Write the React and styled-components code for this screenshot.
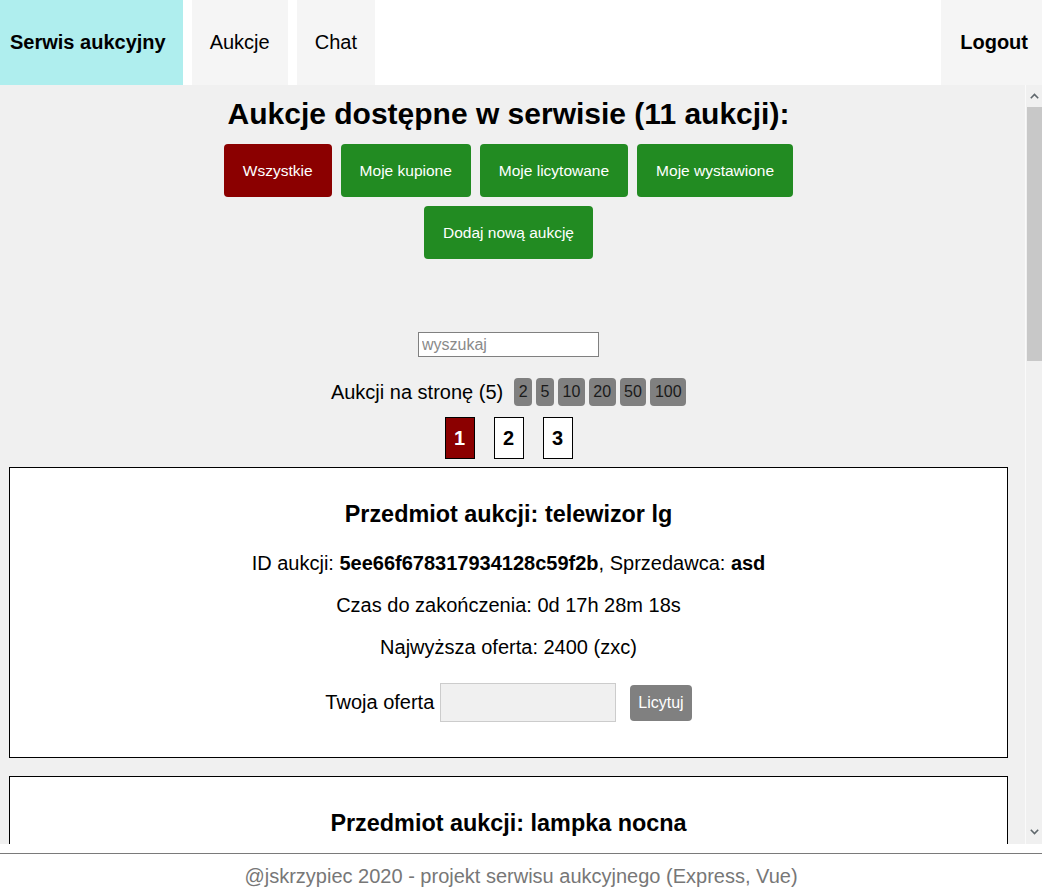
import React from "react";
import styled, { createGlobalStyle } from "styled-components";

const Global = createGlobalStyle`
  html, body { margin: 0; padding: 0; height: 100%; }
  body { font-family: "Liberation Sans", Arial, sans-serif; font-size: 20px; color: #000; background: #fff; overflow: hidden; }
  #root { height: 100%; }
  * { box-sizing: border-box; }
`;

const Page = styled.div`
  display: flex;
  flex-direction: column;
  height: 100vh;
`;

const Header = styled.header`
  display: flex;
  height: 85px;
  background: #fff;
  flex: none;
`;

const NavItem = styled.a`
  display: flex;
  align-items: center;
  height: 100%;
  padding: 0 ${(p) => p.$padR ?? 18}px 0 ${(p) => p.$padL ?? 18}px;
  margin-right: ${(p) => (p.$last ? 0 : 9)}px;
  margin-left: ${(p) => (p.$push ? "auto" : 0)};
  background: ${(p) => p.$bg || "#f5f5f5"};
  font-size: 20px;
  font-weight: ${(p) => (p.$bold ? 700 : 400)};
  color: #000;
  text-decoration: none;
  cursor: pointer;
`;

const Body = styled.div`
  flex: 1;
  min-height: 0;
  display: flex;
  background: #f0f0f0;
`;

const Main = styled.main`
  flex: 1;
  min-width: 0;
  padding: 0 17px 0 9px;
  overflow-y: auto;
  scrollbar-width: none;
  &::-webkit-scrollbar { display: none; }
`;

const ScrollTrack = styled.div`
  flex: none;
  width: 17px;
  display: flex;
  flex-direction: column;
  border-left: 1px solid #fafafa;
  background: #f0f0f0;
`;

const ScrollArrow = styled.div`
  height: ${(p) => p.$h}px;
  display: flex;
  align-items: center;
  justify-content: center;
  color: #5f676c;
`;

const ScrollThumb = styled.div`
  height: 254px;
  margin: 0 0 0 1px;
  background: #c8c8c8;
`;

const ScrollSpace = styled.div`
  flex: 1;
`;

const Title = styled.h1`
  margin: 0;
  padding-top: 12px;
  text-align: center;
  font-size: 30px;
  line-height: 34px;
  font-weight: 700;
`;

const ButtonGrid = styled.div`
  display: flex;
  flex-wrap: wrap;
  justify-content: center;
  gap: 9px;
  max-width: 620px;
  margin: 13px auto 0;
`;

const ActionButton = styled.button`
  height: 53px;
  padding: 0 19px;
  border: none;
  border-radius: 4px;
  background: ${(p) => (p.$active ? "#8b0000" : "#228b22")};
  color: #fff;
  font-family: "Liberation Sans", Arial, sans-serif;
  font-size: 15.5px;
  cursor: pointer;
`;

const SearchWrap = styled.div`
  display: flex;
  justify-content: center;
  margin-top: 73px;
`;

const SearchInput = styled.input`
  width: 181px;
  height: 25px;
  border: 1px solid #808080;
  background: #fff;
  font-family: "Liberation Sans", Arial, sans-serif;
  font-size: 16px;
  padding: 0 3px;
  &::placeholder { color: #8a8a8a; }
`;

const PerPageRow = styled.div`
  display: flex;
  justify-content: center;
  align-items: center;
  gap: 4px;
  margin-top: 21px;
  font-size: 20px;
`;

const PerPageLabel = styled.span`
  margin-right: 7px;
`;

const SizeButton = styled.button`
  height: 28px;
  padding: 0 4.5px;
  border: none;
  border-radius: 4px;
  background: #808080;
  color: #1a1a1a;
  font-family: "Liberation Sans", Arial, sans-serif;
  font-size: 16px;
`;

const Pager = styled.div`
  display: flex;
  justify-content: center;
  gap: 19px;
  margin-top: 11px;
`;

const PageBox = styled.div`
  width: 30px;
  height: 42px;
  display: flex;
  align-items: center;
  justify-content: center;
  border: 1px solid #000;
  background: ${(p) => (p.$active ? "#8b0000" : "#fff")};
  color: ${(p) => (p.$active ? "#fff" : "#000")};
  font-size: 20px;
  font-weight: 700;
`;

const List = styled.div`
  display: flex;
  flex-direction: column;
  gap: 18px;
  padding: 8px 0 20px;
`;

const Card = styled.section`
  background: #fff;
  border: 1px solid #000;
  padding: 33px 20px 35px;
  text-align: center;
`;

const CardTitle = styled.h3`
  margin: 0 0 24px;
  font-size: 23.4px;
  line-height: 27px;
  font-weight: 700;
`;

const Line = styled.p`
  margin: 0 0 19px;
  font-size: 20px;
  line-height: 23px;
`;

const OfferRow = styled.div`
  display: flex;
  justify-content: center;
  align-items: center;
  margin-top: 24px;
  font-size: 20px;
`;

const OfferInput = styled.input`
  width: 176px;
  height: 39px;
  margin: 0 14px 0 6px;
  border: 1px solid #ccc;
  background: #f0f0f0;
`;

const BidButton = styled.button`
  height: 36px;
  padding: 0 8px;
  border: none;
  border-radius: 4px;
  background: #808080;
  color: #fff;
  font-family: "Liberation Sans", Arial, sans-serif;
  font-size: 16px;
`;

const Footer = styled.footer`
  flex: none;
  height: 41px;
  margin-top: 9px;
  border-top: 1px solid #7a7a7a;
  background: #fff;
  display: flex;
  align-items: center;
  justify-content: center;
  padding-top: 4px;
  color: #777;
  font-size: 20px;
`;

const Chevron = ({ up }) => (
  <svg width="9" height="6" viewBox="0 0 9 6" fill="none" stroke="currentColor" strokeWidth="1.6">
    {up ? <polyline points="0.8,5.2 4.5,1.5 8.2,5.2" /> : <polyline points="0.8,0.8 4.5,4.5 8.2,0.8" />}
  </svg>
);

const auctions = [
  { name: "telewizor lg", id: "5ee66f678317934128c59f2b", seller: "asd", time: "0d 17h 28m 18s", bid: "2400 (zxc)" },
  { name: "lampka nocna", id: "5ee66f9a8317934128c59f2c", seller: "asd", time: "1d 2h 14m 51s", bid: "45 (zxc)" },
  { name: "rower górski", id: "5ee670128317934128c59f2d", seller: "zxc", time: "2d 5h 3m 40s", bid: "900 (asd)" },
  { name: "książka", id: "5ee670558317934128c59f2e", seller: "qwe", time: "3d 11h 42m 7s", bid: "20 (asd)" },
  { name: "telefon samsung", id: "5ee670a18317934128c59f2f", seller: "asd", time: "4d 0h 55m 29s", bid: "1100 (qwe)" },
];

export default function App() {
  return (
    <>
      <Global />
      <Page>
        <Header>
          <NavItem $bg="#afeeee" $bold $padL={10} $padR={17}>Serwis aukcyjny</NavItem>
          <NavItem>Aukcje</NavItem>
          <NavItem>Chat</NavItem>
          <NavItem $push $last $bold $padL={19} $padR={14}>Logout</NavItem>
        </Header>
        <Body>
          <Main>
            <Title>Aukcje dostępne w serwisie (11 aukcji):</Title>
            <ButtonGrid>
              <ActionButton $active>Wszystkie</ActionButton>
              <ActionButton>Moje kupione</ActionButton>
              <ActionButton>Moje licytowane</ActionButton>
              <ActionButton>Moje wystawione</ActionButton>
              <ActionButton>Dodaj nową aukcję</ActionButton>
            </ButtonGrid>
            <SearchWrap>
              <SearchInput placeholder="wyszukaj" />
            </SearchWrap>
            <PerPageRow>
              <PerPageLabel>Aukcji na stronę (5)</PerPageLabel>
              {[2, 5, 10, 20, 50, 100].map((n) => (
                <SizeButton key={n}>{n}</SizeButton>
              ))}
            </PerPageRow>
            <Pager>
              <PageBox $active>1</PageBox>
              <PageBox>2</PageBox>
              <PageBox>3</PageBox>
            </Pager>
            <List>
              {auctions.map((a) => (
                <Card key={a.id}>
                  <CardTitle>Przedmiot aukcji: {a.name}</CardTitle>
                  <Line>
                    ID aukcji: <b>{a.id}</b>, Sprzedawca: <b>{a.seller}</b>
                  </Line>
                  <Line>Czas do zakończenia: {a.time}</Line>
                  <Line>Najwyższa oferta: {a.bid}</Line>
                  <OfferRow>
                    Twoja oferta
                    <OfferInput />
                    <BidButton>Licytuj</BidButton>
                  </OfferRow>
                </Card>
              ))}
            </List>
          </Main>
          <ScrollTrack>
            <ScrollArrow $h={22}><Chevron up /></ScrollArrow>
            <ScrollThumb />
            <ScrollSpace />
            <ScrollArrow $h={24}><Chevron /></ScrollArrow>
          </ScrollTrack>
        </Body>
        <Footer>@jskrzypiec 2020 - projekt serwisu aukcyjnego (Express, Vue)</Footer>
      </Page>
    </>
  );
}
